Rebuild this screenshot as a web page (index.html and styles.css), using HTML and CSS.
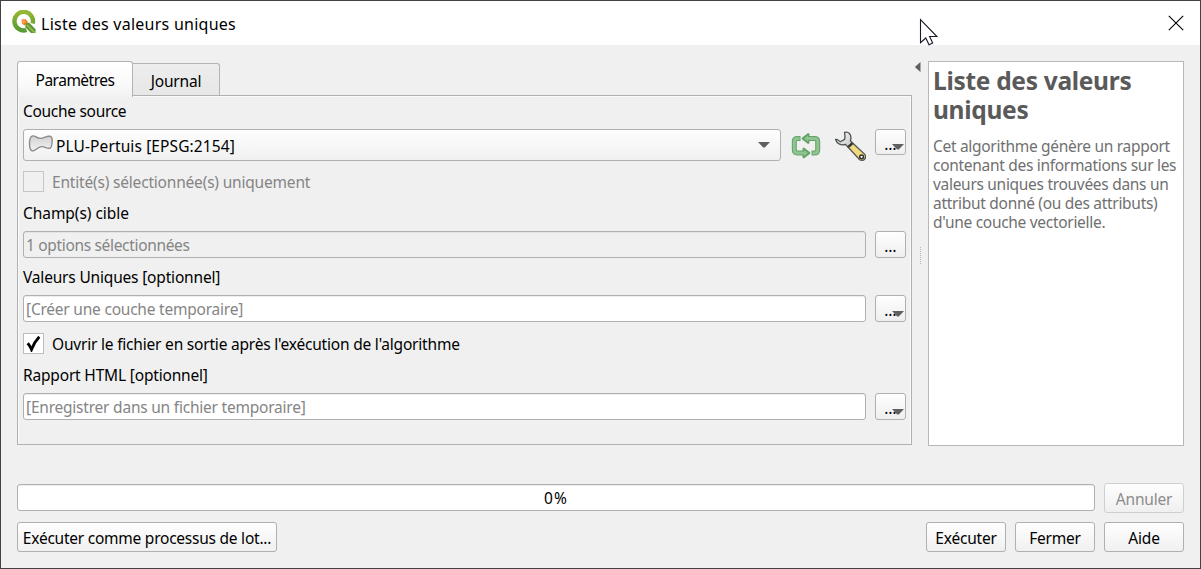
FILE: index.html
```html
<!DOCTYPE html>
<html lang="fr">
<head>
<meta charset="utf-8">
<title>Liste des valeurs uniques</title>
<link rel="stylesheet" href="styles.css">
</head>
<body>
<div class="window">
  <header class="titlebar">
    <svg class="logo" width="24" height="24" viewBox="0 0 24 24">
      <defs><linearGradient id="ring" x1="0" y1="0" x2="0" y2="1"><stop offset="0" stop-color="#96b733"/><stop offset="1" stop-color="#569c32"/></linearGradient></defs>
      <path d="M14.500 20A9.300 9.300 0 1 1 20.700 13.500" fill="none" stroke="url(#ring)" stroke-width="4.400"/>
      <path d="M13.500 12.800h3.700l6.300 6.500v3.700h-4.500l-5.500-5.800z" fill="#589632"/>
      <path d="M15 15l7.500 7.500" stroke="#93b847" stroke-width="1.800"/>
      <path d="M9.800 9.200h3.800l2.400 2.800-3.400 3.600-2.800-2.200z" fill="#ee7913"/>
      <path d="M9.800 9.200h2.400l1.800 2.500-2.500 2.400-1.700-1.200z" fill="#f3a04c"/>
    </svg>
    <h1 class="caption">Liste des valeurs uniques</h1>
    <svg class="close" width="16" height="16" viewBox="0 0 16 16"><path d="M.8.8l14.400 14.400M15.200.8L.8 15.200" stroke="#000" stroke-width="1.100"/></svg>
  </header>

  <main class="content">
    <section class="main">
      <nav class="tabs">
        <div class="tab active">Paramètres</div>
        <div class="tab journal">Journal</div>
      </nav>
      <div class="panel">
        <label class="label first">Couche source</label>
        <div class="row source">
          <div class="combo">
            <svg class="polygon" width="26" height="20" viewBox="0 0 26 20">
              <defs><linearGradient id="poly" x1="0" y1="0" x2="0" y2="1"><stop offset="0" stop-color="#d2d2d2"/><stop offset="1" stop-color="#f2f2f2"/></linearGradient></defs>
              <path d="M4 2.200C7 .6 8.500 5 13.500 4.300c3.500-.5 5-2.600 8.500-2 2.200.5 2.400 3 2.100 6-.2 3-.5 5.800-2.600 6-3.500.3-5-2-8-1.700-3.500.4-5.500 3.400-8 4.200C2.500 17.500 1.500 14 1.500 9.500 1.500 6 2 3.200 4 2.200z" fill="url(#poly)" stroke="#8c8e8c" stroke-width="1.400"/>
            </svg>
            <span class="combo-text">PLU-Pertuis [EPSG:2154]</span>
            <svg class="arrow" width="12" height="6" viewBox="0 0 12 6"><path d="M0 0h12L6.800 5.600H5.200z" fill="#606060"/></svg>
          </div>
          <svg class="iterate" width="30" height="27" viewBox="0 0 30 27">
            <g fill="none" stroke-linejoin="round">
              <path d="M9.500 5.500H6.500Q3.300 5.500 3.300 8.500v8.300Q3.300 20 6.500 20H14M20.500 20h3Q26.700 20 26.700 17V8.500Q26.700 5.500 23.500 5.500H16" stroke="#62a366" stroke-width="5"/>
              <path d="M17.200 1.400v8.200L12 5.500zM12.800 15.900v8.200L18 20z" fill="#8cc08e" stroke="#62a366" stroke-width="2.600"/>
              <path d="M17 2.400v6.200L13 5.500zM13 16.900v6.200L17 20z" fill="#8fc391"/>
              <path d="M8.700 5.500H6.500Q3.300 5.500 3.300 8.500v8.300Q3.300 20 6.500 20H14M21.300 20h2.200Q26.700 20 26.700 17V8.500Q26.700 5.500 23.500 5.500H16" stroke="#8fc391" stroke-width="3"/>
            </g>
          </svg>
          <svg class="wrench" width="32" height="31" viewBox="0 0 32 31">
            <defs><linearGradient id="steel" x1="0" y1="0" x2="1" y2="1"><stop offset="0" stop-color="#fff"/><stop offset="1" stop-color="#bfc4c2"/></linearGradient></defs>
            <path d="M13.500 15.500l4.500-4 12.800 11.800q1.800 3.200-.6 5.300-2.200 1.500-4.600.2z" fill="#f0da80" stroke="#555" stroke-width="1.300"/>
            <path d="M10.500 1.300c4-1 7 2 6.300 6.500l-.3 2.200 2.500 2.600-4.500 4-3-3.200c-4 1.300-8.600-.2-9.900-4.900l1.200-.2 3.500 2.500 4.400-2.400.3-3.600z" fill="url(#steel)" stroke="#4f5352" stroke-width="1.300" stroke-linejoin="round"/>
            <path d="M14.300 15.800l3.800-3.500" stroke="#333" stroke-width="2.200"/>
            <circle cx="27.600" cy="25.800" r="1.900" fill="#fff" stroke="#333" stroke-width="1.500"/>
          </svg>
          <button class="more menu top"><span class="dots">…</span><svg class="drop" width="12" height="6" viewBox="0 0 12 6"><path d="M0 0h12L6.800 5.600H5.200z" fill="#606060"/></svg></button>
        </div>
        <div class="check disabled"><span class="box"></span><span class="check-text entities">Entité(s) sélectionnée(s) uniquement</span></div>
        <label class="label fields">Champ(s) cible</label>
        <div class="row"><div class="input readonly">1 options sélectionnées</div><button class="more"><span class="dots">…</span></button></div>
        <label class="label">Valeurs Uniques [optionnel]</label>
        <div class="row"><div class="input">[Créer une couche temporaire]</div><button class="more menu"><span class="dots">…</span><svg class="drop" width="12" height="6" viewBox="0 0 12 6"><path d="M0 0h12L6.800 5.600H5.200z" fill="#606060"/></svg></button></div>
        <div class="check open"><span class="box"><svg width="15" height="17" viewBox="0 0 15 17"><path d="M1.700 8.200q2.300 2.600 3.800 6.300Q8.300 7 13.300 1.800" fill="none" stroke="#000" stroke-width="2.800"/></svg></span><span class="check-text">Ouvrir le fichier en sortie après l'exécution de l'algorithme</span></div>
        <label class="label report">Rapport HTML [optionnel]</label>
        <div class="row"><div class="input">[Enregistrer dans un fichier temporaire]</div><button class="more menu"><span class="dots">…</span><svg class="drop" width="12" height="6" viewBox="0 0 12 6"><path d="M0 0h12L6.800 5.600H5.200z" fill="#606060"/></svg></button></div>
      </div>
    </section>
    <div class="splitter">
      <svg class="collapse" width="6" height="10" viewBox="0 0 6 10"><path d="M5.500 0v10L.3 5.600V4.400z" fill="#606060"/></svg>
      <span class="grip"></span>
    </div>
    <aside class="help">
      <h2 class="help-title">Liste des valeurs uniques</h2>
      <p class="help-text">Cet algorithme génère un rapport<br>contenant des informations sur les<br>valeurs uniques trouvées dans un<br>attribut donné (ou des attributs)<br>d'une couche vectorielle.</p>
    </aside>
  </main>

  <footer class="footer">
    <div class="footer-row">
      <div class="progress">0%</div>
      <button class="button muted">Annuler</button>
    </div>
    <div class="footer-row actions">
      <button class="button batch">Exécuter comme processus de lot...</button>
      <button class="button">Exécuter</button>
      <button class="button">Fermer</button>
      <button class="button">Aide</button>
    </div>
  </footer>
  <svg class="cursor" width="20" height="30" viewBox="0 0 20 30"><path d="M1.500 1.500v23.200l5.300-4.700 3.200 6.700 3.700-1.700-3.100-6.500h7.300z" fill="#fff" stroke="#1a1a2a" stroke-width="1.100"/></svg>
</div>
</body>
</html>
```
FILE: styles.css
```css
* { box-sizing: border-box; }

body {
  margin: 0;
  color: #000;
  font: 15.5px "Noto Sans", "Open Sans", sans-serif;
  letter-spacing: -0.2px;
}

svg { display: block; flex: none; }

button { font: inherit; letter-spacing: inherit; color: inherit; padding: 0; }

.window {
  position: relative;
  display: flex;
  flex-direction: column;
  width: 1201px;
  height: 569px;
  border: 1px solid #434143;
  background: #f0f0f0;
  overflow: hidden;
  white-space: nowrap;
}

.titlebar {
  display: flex;
  align-items: center;
  height: 44px;
  padding: 0 16px 0 11px;
  background: #fff;
}
.logo { margin-top: -2px; }
.close { margin-top: -1px; }

.caption {
  flex: 1;
  margin: 0 0 0 5px;
  padding-top: 1px;
  font-size: 16px;
  font-weight: 400;
  letter-spacing: 0.25px;
}

.cursor { position: absolute; left: 918px; top: 17px; }

.content {
  display: flex;
  height: 401px;
  padding: 16px 16px 0;
}

.main { width: 895px; }

.tabs { display: flex; align-items: flex-end; height: 34px; }

.tab {
  height: 32px;
  width: 87px;
  border: 1px solid #b4b4b4;
  border-left: 0;
  border-bottom: 0;
  border-radius: 0 3px 0 0;
  background: linear-gradient(#ededed, #e7e7e7);
  line-height: 34px;
  text-align: center;
}

.tab.active {
  position: relative;
  width: 116px;
  height: 36px;
  margin-bottom: -2px;
  border-left: 1px solid #b4b4b4;
  border-radius: 3px 3px 0 0;
  background: linear-gradient(#fff, #fafafa 60%, #f2f2f2);
  line-height: 36px;
  letter-spacing: -0.5px;
}

.panel {
  height: 350px;
  padding: 0 5px;
  border: 1px solid #b0b0b0;
  box-shadow: inset 1px 1px #fafafa, inset -1px 0 #fafafa;
}

.label { display: block; height: 37px; line-height: 39px; letter-spacing: -0.18px; }
.label.first { height: 33px; line-height: 30px; letter-spacing: -0.3px; }
.label.fields { height: 39px; line-height: 42px; letter-spacing: -0.05px; }
.label.report { height: 39px; line-height: 42px; }

.row { display: flex; gap: 9px; height: 27px; }
.source { height: 32px; gap: 0; }

.combo {
  display: flex;
  align-items: center;
  width: 758px;
  padding: 0 10px 0 4px;
  border: 1px solid #b0b0b0;
  border-radius: 3px;
  background: linear-gradient(#fefefe, #f0f0f0);
}
.polygon { margin-top: -2px; }
.combo-text { flex: 1; margin-left: 2px; padding-top: 2px; line-height: 30px; letter-spacing: 0.11px; }

.iterate { margin: 4px 0 0 10px; }
.wrench { margin: 2px 0 0 13px; }

.more {
  position: relative;
  width: 31px;
  height: 27px;
  border: 1px solid #b0b0b0;
  border-radius: 3px;
  background: linear-gradient(#fefefe, #efefef);
}
.more.top { margin-left: 9px; height: 26px; }
.dots { display: block; line-height: 28px; letter-spacing: 0; }
.drop { position: absolute; right: 1px; bottom: 4px; }

.check { display: flex; align-items: center; height: 21px; margin-top: 10px; }
.check.open { margin-top: 11px; }
.check.disabled { color: #858585; }
.box {
  display: grid;
  place-items: center;
  width: 21px;
  height: 21px;
  border: 1px solid #bdbdbd;
  background: #fff;
}
.disabled .box { background: #f0f0f0; border-color: #c6c6c6; }
.check-text { margin-left: 8px; padding-top: 2px; line-height: 21px; }
.entities { letter-spacing: -0.19px; }

.input {
  flex: 1;
  padding-left: 2px;
  border: 1px solid #b0b0b0;
  border-radius: 3px;
  background: #fff;
  box-shadow: inset 0 1px #ededed;
  color: #858585;
  line-height: 27px;
  letter-spacing: -0.22px;
}
.input.readonly { background: #f0f0f0; box-shadow: inset 0 1px #e3e3e3; letter-spacing: -0.33px; }

.splitter { position: relative; width: 16px; }
.collapse { margin: 1px 0 0 3px; }
.grip {
  position: absolute;
  left: 8px;
  top: 186px;
  height: 17px;
  border-left: 1px dotted #b5b5b5;
}

.help {
  width: 256px;
  height: 385px;
  padding: 4px;
  border: 1px solid #b8b8b8;
  background: #fff;
}
.help-title {
  margin: 0;
  color: #5a5a5a;
  font-size: 24.5px;
  line-height: 29px;
  letter-spacing: -0.3px;
  white-space: normal;
}
.help-text { margin: 13px 0 0; color: #707070; line-height: 19px; letter-spacing: -0.3px; }

.footer { padding: 37px 16px 0; }
.footer-row { display: flex; align-items: flex-start; gap: 9px; height: 30px; }
.actions { margin-top: 9px; }

.progress {
  flex: 1;
  height: 27px;
  margin-top: 1px;
  border: 1px solid #b0b0b0;
  border-radius: 3px;
  background: #fff;
  box-shadow: inset 0 1px #ededed;
  line-height: 27px;
  text-align: center;
  letter-spacing: 1.2px;
}

.button {
  width: 80px;
  height: 30px;
  border: 1px solid #b0b0b0;
  border-radius: 3px;
  background: linear-gradient(#fefefe, #f0f0f0);
  line-height: 30px;
}
.button.muted { border-color: #cfcfcf; color: #8c8c8c; }
.button.batch { width: 260px; margin-right: auto; letter-spacing: -0.24px; }
```
